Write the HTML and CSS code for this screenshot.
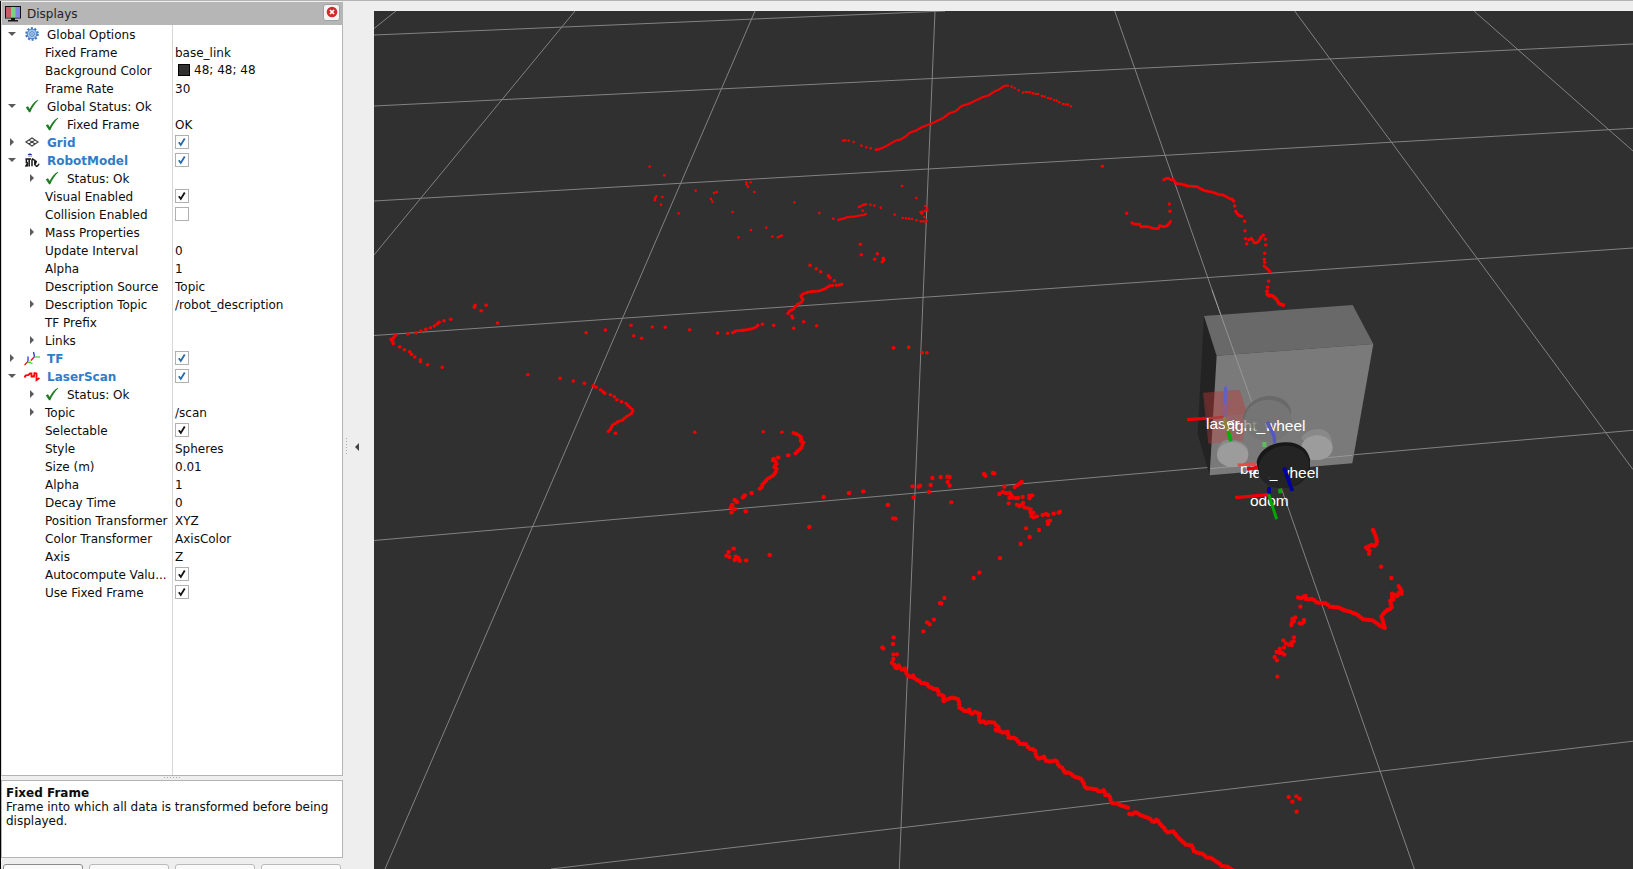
FILE: index.html
```html
<!DOCTYPE html>
<html lang="en">
<head>
<meta charset="utf-8">
<title>Displays</title>
<link rel="stylesheet" href="styles.css">
</head>
<body>
<svg class="defs" width="0" height="0">
  <symbol id="open" viewBox="0 0 8 8"><path d="M0 2h8L4 6z" fill="#5a5a5a"/></symbol>
  <symbol id="shut" viewBox="0 0 8 8"><path d="M2 0v8l4-4z" fill="#5a5a5a"/></symbol>
  <symbol id="ok" viewBox="0 0 14 14"><path d="M.8 8.2 3 7.2l1.700 2.700C6.500 6 9 2.800 12.800.7l.5.5C10 4.500 7.300 8.500 5.300 13.200H4z" fill="#1e7b22"/></symbol>
  <symbol id="gear" viewBox="0 0 14 14"><circle cx="7" cy="7" r="5.700" fill="none" stroke="#3f74ba" stroke-width="2.200" stroke-dasharray="2 1.581"/><circle cx="7" cy="7" r="4.800" fill="#a9c8ef" stroke="#4a7fc4" stroke-width="1"/><circle cx="7" cy="7" r="2.300" fill="#c8dcf5" stroke="#4a7fc4"/><circle cx="7" cy="7" r=".8" fill="#3f74ba"/></symbol>
  <symbol id="grid" viewBox="0 0 14 10"><path d="M.9 5 7 1 13.100 5 7 9zM3.900 3l6.200 4M10.100 3 3.900 7" fill="none" stroke="#3c3c3c" stroke-width="1.100"/></symbol>
  <symbol id="robot" viewBox="0 0 16 16"><path d="M3.500 1.500Q5.500-.2 8 1.500v1H3.500z" fill="#1c2f9a"/><path d="M4 3h4v1H4z" fill="#aaa"/><path d="M1 6.500h6M2 6v5M1 14.500l2-3v3M5 6.500v8M8 7v7M8 6l3 2v5M11 8l1.500 1L11 13M12 13c.5 2 2 1.500 3.500-1.500" stroke="#161616" stroke-width="1.600" fill="none"/></symbol>
  <symbol id="tf" viewBox="0 0 16 14"><path d="M4 10 .5 13.500M10.500 5 7 9" stroke="#e81010" stroke-width="1.200" fill="none"/><path d="M4 10V5M10.500 5 9.500.5" stroke="#1a1aff" stroke-width="1.200"/><path d="M4 10.500 8.500 12M10.500 5.500H16" stroke="#00d800" stroke-width="1.200"/><path d="m7 9-2.500 1.500" stroke="#e8d820" stroke-width="1.200"/></symbol>
  <symbol id="laser" viewBox="0 0 16 10"><path d="M.5 6 1.500 4 4.500 3.500 6 2 7.500 2 7.500 5 10 5 10.500 1.500 12.500 2 12.500 8.500 15.500 6.500" fill="none" stroke="#f00" stroke-width="1.800"/></symbol>
  <symbol id="check" viewBox="0 0 14 14"><path d="m3.300 7.300 2.300 3.200L10.200 3" fill="none" stroke="currentColor" stroke-width="2.100"/></symbol>
</svg>
<main class="app">
  <section class="dock">
    <header class="title">
      <svg class="monitor" viewBox="0 0 16 16"><rect x=".5" y=".5" width="15" height="11.500" fill="#aaa" stroke="#111"/><path d="M1 1h5v10.500H1z" fill="#c65c63"/><path d="M6 1h4.500v10.500H6z" fill="#7ad07c"/><path d="M10.500 1H15v10.500h-4.500z" fill="#8383e6"/><path d="M6 12h4v2h3v1.500H3V14h3z" fill="#151515"/></svg>
      <span>Displays</span>
      <button class="close" aria-label="Close"><svg viewBox="0 0 12 12"><circle cx="6" cy="6" r="5.300" fill="#d12a2a"/><path d="m4 4 4 4M8 4 4 8" stroke="#fff" stroke-width="1.700"/></svg></button>
    </header>
    <div class="tree">
      <div class="row"><div class="name"><svg class="arr"><use href="#open"/></svg><svg class="ico"><use href="#gear"/></svg><b class="t">Global Options</b></div><div class="val"></div></div>
      <div class="row"><div class="name prop">Fixed Frame</div><div class="val">base_link</div></div>
      <div class="row"><div class="name prop">Background Color</div><div class="val color"><i class="swatch"></i>48; 48; 48</div></div>
      <div class="row"><div class="name prop">Frame Rate</div><div class="val">30</div></div>
      <div class="row"><div class="name"><svg class="arr"><use href="#open"/></svg><svg class="ico"><use href="#ok"/></svg><b class="t">Global Status: Ok</b></div><div class="val"></div></div>
      <div class="row"><div class="name sub"><svg class="arr"></svg><svg class="ico"><use href="#ok"/></svg><b class="t">Fixed Frame</b></div><div class="val">OK</div></div>
      <div class="row"><div class="name"><svg class="arr"><use href="#shut"/></svg><svg class="ico"><use href="#grid"/></svg><b class="t display">Grid</b></div><div class="val"><svg class="box blue"><use href="#check"/></svg></div></div>
      <div class="row"><div class="name"><svg class="arr"><use href="#open"/></svg><svg class="ico wide"><use href="#robot"/></svg><b class="t display">RobotModel</b></div><div class="val"><svg class="box blue"><use href="#check"/></svg></div></div>
      <div class="row"><div class="name sub"><svg class="arr"><use href="#shut"/></svg><svg class="ico"><use href="#ok"/></svg><b class="t">Status: Ok</b></div><div class="val"></div></div>
      <div class="row"><div class="name prop">Visual Enabled</div><div class="val"><svg class="box"><use href="#check"/></svg></div></div>
      <div class="row"><div class="name prop">Collision Enabled</div><div class="val"><svg class="box"></svg></div></div>
      <div class="row"><div class="name branch"><svg class="arr"><use href="#shut"/></svg>Mass Properties</div><div class="val"></div></div>
      <div class="row"><div class="name prop">Update Interval</div><div class="val">0</div></div>
      <div class="row"><div class="name prop">Alpha</div><div class="val">1</div></div>
      <div class="row"><div class="name prop">Description Source</div><div class="val">Topic</div></div>
      <div class="row"><div class="name branch"><svg class="arr"><use href="#shut"/></svg>Description Topic</div><div class="val">/robot_description</div></div>
      <div class="row"><div class="name prop">TF Prefix</div><div class="val"></div></div>
      <div class="row"><div class="name branch"><svg class="arr"><use href="#shut"/></svg>Links</div><div class="val"></div></div>
      <div class="row"><div class="name"><svg class="arr"><use href="#shut"/></svg><svg class="ico wide"><use href="#tf"/></svg><b class="t display">TF</b></div><div class="val"><svg class="box blue"><use href="#check"/></svg></div></div>
      <div class="row"><div class="name"><svg class="arr"><use href="#open"/></svg><svg class="ico wide"><use href="#laser"/></svg><b class="t display">LaserScan</b></div><div class="val"><svg class="box blue"><use href="#check"/></svg></div></div>
      <div class="row"><div class="name sub"><svg class="arr"><use href="#shut"/></svg><svg class="ico"><use href="#ok"/></svg><b class="t">Status: Ok</b></div><div class="val"></div></div>
      <div class="row"><div class="name branch"><svg class="arr"><use href="#shut"/></svg>Topic</div><div class="val">/scan</div></div>
      <div class="row"><div class="name prop">Selectable</div><div class="val"><svg class="box"><use href="#check"/></svg></div></div>
      <div class="row"><div class="name prop">Style</div><div class="val">Spheres</div></div>
      <div class="row"><div class="name prop">Size (m)</div><div class="val">0.01</div></div>
      <div class="row"><div class="name prop">Alpha</div><div class="val">1</div></div>
      <div class="row"><div class="name prop">Decay Time</div><div class="val">0</div></div>
      <div class="row"><div class="name prop">Position Transformer</div><div class="val">XYZ</div></div>
      <div class="row"><div class="name prop">Color Transformer</div><div class="val">AxisColor</div></div>
      <div class="row"><div class="name prop">Axis</div><div class="val">Z</div></div>
      <div class="row"><div class="name prop">Autocompute Valu...</div><div class="val"><svg class="box"><use href="#check"/></svg></div></div>
      <div class="row"><div class="name prop">Use Fixed Frame</div><div class="val"><svg class="box"><use href="#check"/></svg></div></div>
      <div class="row rest"><div class="name"></div><div class="val"></div></div>
    </div>
    <div class="split"><i></i></div>
    <div class="help"><strong>Fixed Frame</strong><p>Frame into which all data is transformed before being displayed.</p></div>
    <div class="buttons"><i class="first"></i><i></i><i></i><i></i></div>
  </section>
  <div class="handle"><i class="grip"></i><svg width="8" height="8" viewBox="0 0 8 8"><path d="M6 0v8L2 4z" fill="#444"/></svg></div>
  <svg class="view" viewBox="374 11 1259 858">
    <defs>
      <marker id="d3" class="mk" markerUnits="userSpaceOnUse" markerWidth="16" markerHeight="16" refX="8" refY="8"><circle cx="8" cy="8" r="3.900"/></marker>
      <marker id="d4" class="mk" markerUnits="userSpaceOnUse" markerWidth="16" markerHeight="16" refX="8" refY="8"><circle cx="8" cy="8" r="5.200"/></marker>
      <marker id="d5" class="mk" markerUnits="userSpaceOnUse" markerWidth="16" markerHeight="16" refX="8" refY="8"><circle cx="8" cy="8" r="6.500"/></marker>
      <clipPath id="near"><path d="M255 515h41v60h-41zM326 563h27v20h-27zM380 515h110v60H380z"/></clipPath>
    </defs>
    <g class="lines">
      <path d="M374 28.500 396 11M374 255 575 11M385 869 755 11M899.300 869 935 11M1114.700 11 1215.600 300 1414.300 869M1294.700 11 1633 469.600M1474 11 1633 151"/>
      <path d="M374 35 945 11M374 106 1633 44M374 201 1633 128.300M374 335.500 1633 248M374 540.500 1160 471.700 1633 430.300M551 869 1250 786.700 1633 741.200"/>
    </g>
    <!-- far wall and furniture -->
    <g transform="translate(630 70) scale(.33333)">
      <polyline class="run s" points="740,239 752,236 768,229 784,219 798,212 812,208 826,200 840,188 858,182 876,171 902,162 920,153 940,144 956,131 980,122 994,108 1018,101 1056,82 1076,76 1092,65 1108,58 1122,48 1132,47"/>
      <polyline class="p3" points="640,212 646,211 656,212 671,216 694,227 709,232 722,235 738,239 1133,47 1145,50 1154,54 1166,61 1179,68 1187,66 1193,66 1200,67 1209,70 1217,72 1224,72 1236,78 1244,80 1254,84 1262,86 1272,90 1280,92 1288,97 1299,102 1307,103 1314,104 1323,109"/>
      <polyline class="p3" points="59,290 103,316 197,362 252,369 260,366 243,387 247,395 349,337 350,343 362,337 354,350 373,366 79,379 75,385 75,391 97,381 93,404 146,430 308,426 325,502 363,480 409,473 427,500 444,502 450,499 455,497 493,397 568,429 816,348 859,384 886,408 891,415 892,422 885,423 877,425 872,427 876,431 883,441 890,452 887,455 880,454 872,454 859,451 846,447 837,446 828,445 818,444 794,434 752,413 733,407 721,404 708,403 702,404 697,406 692,409 687,411 698,422 707,432 610,446"/>
      <polyline class="run s" points="626,449 640,446 654,441 672,440 688,437 704,434"/>
      <polyline class="p4" points="691,523 694,554 742,551 734,568 760,565 761,570 757,575 540,586 559,596 572,605 595,617 600,623 613,632 619,646 628,645 635,643 485,738 488,744 521,755 491,775 560,767 431,766 397,763 3,766 11,797 35,805 67,771 106,772 179,779 263,789 293,790 340,781 790,833 836,832"/>
      <polyline class="run" points="608,646 596,648 586,656 576,660 562,664 544,664 528,668 514,674 512,682 520,686 514,698 500,704 492,716 480,722 472,733"/>
      <polyline class="run" points="308,788 320,782 340,781 356,778 370,775 380,770 386,764"/>
    </g>
    <!-- left side -->
    <g transform="translate(374 280) scale(.35714 .33333)">
      <polyline class="p4" points="283,76 281,82 300,92 314,76 346,129 215,118 196,122 182,127 177,132 169,138 158,143 145,148 131,153 118,158 95,162 60,166 55,173 48,178 52,184 54,191 72,200 85,209 100,215 105,223 114,231 130,239 130,245 150,254 191,262 594,158 648,150 431,284 521,295 558,303 589,310 614,317 622,322 634,329 641,335 646,340 662,344 673,350 680,359 693,365 676,460 898,457 1090,455 1142,457 1455,204 1497,202 1535,218 1548,218"/>
      <polyline class="run" points="706,370 714,380 726,390 720,402 706,410 696,420 684,424 674,432 666,436 664,446 652,458"/>
      <polyline class="run m" points="1175,459 1188,464 1198,474 1193,482 1202,487 1198,501 1190,510 1180,520"/>
      <polyline class="run m" points="1117,541 1124,544 1128,554 1119,560 1128,568 1123,580 1114,590 1104,594 1096,604 1088,612 1086,622 1076,630"/>
      <polyline class="p5" points="1160,526 1132,533 1119,537 1057,639 1038,646 1033,652 1010,660 1016,666 1003,675 999,683 1010,687 1001,697 1041,694 1259,651 1330,639 1370,634 1439,675 1454,715 1460,716 1219,741 1007,806 993,816 987,827 995,831 1013,830 1020,834 1010,840 1024,842 1042,841 1108,825"/>
    </g>
    <!-- near wall -->
    <g transform="translate(850 450) scale(.33333)">
      <polyline class="p5" points="187,109 206,110 210,107 247,84 272,81 292,80 299,81 293,96 299,107 242,105 237,126 191,142 304,157 402,72 406,77 429,69 433,70 463,110 494,111 502,106 509,101 515,96 448,132 458,126 468,129 479,129 484,136 478,144 487,143 497,144 504,144 518,141 476,160 538,137 547,136 539,145 519,159 501,164 508,168 516,164 523,172 533,175 542,178 541,186 550,188 544,198 551,202 560,199 578,195 588,192 594,195 611,191 626,188 630,185 593,214 600,212 594,222 528,235 567,240 539,261 512,282 450,324 388,368 371,384 283,444 270,459 274,461 252,509 231,517 239,523 220,544 131,562 129,582 97,592 100,595 130,613 141,613 130,627"/>
      <polyline class="run l" points="126,638 134,646 138,657 146,646 153,659 166,655 168,668 178,682 190,676 194,686 206,692 214,699 230,700 236,710 252,717 264,718 266,733 281,736 279,754 293,747 308,743 326,748 328,773 338,778 346,785 358,779 363,793 374,786 390,791 386,804 390,816 402,814 408,820 418,815 434,819 440,828 449,833 435,841 452,843 460,849 473,844 476,865 492,863 502,870 508,881 528,883 538,896 554,899 558,918 568,927 584,919 586,932 602,935 618,930 626,948 640,956 643,968 658,967 672,980 692,985 700,997 706,1014 724,1016 738,1018 748,1026 763,1020 766,1036 778,1035 784,1059 800,1060 816,1068 834,1073"/>
      <polyline class="run l" points="838,1092 848,1093 856,1085 872,1096 888,1101 902,1107 910,1118 921,1108 932,1124 942,1134 950,1147 970,1144 980,1158 994,1172 1008,1184 1026,1187 1032,1204 1046,1209 1060,1212 1068,1222 1084,1224 1096,1233 1108,1240 1116,1249 1132,1250 1150,1262"/>
    </g>
    <!-- right side -->
    <g transform="translate(1080 150) scale(.33333)">
      <polyline class="p4" points="67,49 140,190 268,162 270,184 461,153 464,168 494,214 495,242 497,266 500,281 543,262 550,256 556,268 557,285 554,310 553,328 554,337 566,393 563,412"/>
      <polyline class="run" points="252,89 262,83 272,89 279,87 287,100 308,103 322,108 352,110 370,121 400,127 414,133 430,135 446,144 459,149"/>
      <polyline class="run" points="467,184 474,194 480,198 492,199"/>
      <polyline class="run" points="507,269 515,265 524,280 534,276 543,264"/>
      <polyline class="run" points="156,219 166,223 178,222 184,231 202,229 218,235 235,236 240,226 250,231 264,226 272,213"/>
      <polyline class="run" points="553,348 562,357 568,362 572,371"/>
      <polyline class="run m" points="561,424 562,436 576,437 588,446 598,462 616,467"/>
    </g>
    <g transform="translate(1240 510) scale(.33333)">
      <polyline class="run l" points="399,60 406,76 411,92 407,108 395,105 377,113 389,120 387,132"/>
      <polyline class="run l" points="476,229 484,240 486,252 474,248 474,260 456,250 456,260 462,270 450,270 453,284 456,294 442,300 432,308 424,320 428,330 431,342 434,354 418,346 408,338 394,330 372,329 362,322 350,313 330,305 314,301 298,293 270,290 258,280 230,277 218,267 198,268 196,256 184,265 172,262"/>
      <polyline class="p5" points="423,170 454,204 181,290 166,322 157,327 162,333 156,338 154,345 192,330 191,336 185,341 179,340 162,382 161,394 155,397 155,405 146,404 138,401 130,391 132,413 119,417 110,426 119,429 126,428 133,434 104,441 111,451 112,500 146,861 169,859 179,866 157,875 170,905"/>
    </g>
    <!-- robot model with its frame axes -->
    <g class="robot" transform="translate(1160 290) scale(.33333)">
      <path d="M132 78 170 197 149 556 113 432z" fill="#232323"/>
      <path d="M132 78 578 45 640 162 170 197z" fill="#696969"/>
      <path d="M170 197 640 162 577 520 149 556z" fill="#7a7a7a"/>
      <path d="M156 0 275 335M150 536 577 496" stroke="#a0a0a0" stroke-width="3" opacity=".8"/>
      <path d="m129 308 110-9 23 72-14 82-103 8z" fill="#c44040" opacity=".36"/><path d="m129 308 110-9 23 72-114 10z" fill="#b82020" opacity=".1"/>
      <path d="M248 386C256 344 290 318 328 318c32 0 54 12 65 42v28z" fill="#696969"/>
      <ellipse cx="325" cy="392" rx="71" ry="63" fill="#757575"/>
      <path d="m170 478 18-25c20-8 60-5 76 23v20z" fill="#898989"/><ellipse cx="218" cy="494" rx="47" ry="38" fill="#9c9c9c"/>
      <path d="m423 446c10-20 32-29 55-29 25 3 36 17 39 45l-20 28z" fill="#898989"/><ellipse cx="471" cy="473" rx="47" ry="37" fill="#9c9c9c"/>
      <path d="m197 290-3 90" stroke="#6161c4" stroke-width="9"/><path d="m194 342-2 38" stroke="#8e5a87" stroke-width="9"/>
      <path d="m81 389 57-4" stroke="#ed0000" stroke-width="10"/><path d="m138 385 54-4" stroke="#b63535" stroke-width="7"/>
      <path d="m192 381 13 43" stroke="#8d8137" stroke-width="9"/>
      <path d="m313 456 0 15" stroke="#5abf5a" stroke-width="12"/>
      <path d="m322 396 20 42 2 22" stroke="#5757c0" stroke-width="10" fill="none"/>
      <g class="tag"><text x="138" y="416">laser</text><text x="199" y="423">right_wheel</text><text x="240" y="551">base_link</text><text x="270" y="647">odom</text></g>
      <path d="m233 525 55-4" stroke="#e84848" stroke-width="9"/>
      <path d="m252 388h82l-4 26h-78z" fill="#747474" opacity=".6"/>
      <path d="m272 423v-35h50v35z" fill="#747474" opacity=".5"/>
      <path d="m192 385 10 34" stroke="#8d8137" stroke-width="9"/><path d="m204 422 9 32" stroke="#05ae05" stroke-width="11"/>
      <path d="m322 396 20 42" stroke="#5757c0" stroke-width="10"/>
      <path d="m290 515c8-35 46-59 87-58 40-1 66 20 73 50v35c-13 33-47 54-89 52-41 0-68-28-71-79z" fill="#181818"/>
      <ellipse cx="372" cy="531" rx="77" ry="63" fill="#242424" transform="rotate(-14 372 531)"/>
      <g class="tag" clip-path="url(#near)"><text x="267" y="563">left_wheel</text></g>
      <path d="m260 537 33-4" stroke="#e80000" stroke-width="11"/>
      <path d="m372 533 25 70" stroke="#0000a2" stroke-width="11"/>
      <path d="m360 596 1 14" stroke="#00a900" stroke-width="11"/>
      <path d="m328 591-2 21" stroke="#0000a6" stroke-width="11"/>
      <path d="m225 623 100-9" stroke="#ed0000" stroke-width="10"/>
      <path d="m326 613 24 75" stroke="#00a500" stroke-width="9"/>
    </g>
  </svg>
</main>
</body>
</html>
```
FILE: styles.css
```css
* { box-sizing: border-box; }
body { margin: 0; background: #eee; font: 12px/18px "DejaVu Sans", sans-serif; color: #0c0c0c; overflow: hidden; }
.defs { display: block; height: 0; }
.app { display: flex; width: 1633px; height: 869px; border-top: 1px solid #b4b4b4; overflow: hidden; }
.dock { width: 343px; flex: none; border-left: 1px solid #000; display: flex; flex-direction: column; }
.title { height: 24px; flex: none; border-top: 1px solid #eee; border-left: 1px solid #d8d8d8; background: #b6b6b6; display: flex; align-items: center; padding: 0 3px 0 3px; gap: 6px; color: #222; }
.title span { flex: 1; }
.monitor { width: 16px; height: 16px; }
.close { width: 17px; height: 17px; margin-bottom: 3px; padding: 0; border: 1px solid #a0a0a0; border-radius: 3px; background: #f4f4f4; display: grid; place-items: center; }
.close svg { width: 12px; height: 12px; }
.tree { height: 751px; flex: none; background: #fff; border: 1px solid #b4b4b4; border-top: 0; border-left-color: #d8d8d8; display: flex; flex-direction: column; }
.row { height: 18px; flex: none; display: flex; white-space: nowrap; }
.rest { flex: 1; }
.name { width: 171px; border-right: 1px solid #d6d6d6; display: flex; align-items: center; padding: 1px 0 0 6px; }
.val { flex: 1; padding: 1px 0 0 2px; display: flex; align-items: center; }
.sub { padding-left: 26px; }
.prop { padding-left: 43px; }
.branch { padding-left: 26px; gap: 9px; }
.arr { width: 8px; height: 8px; flex: none; margin-bottom: 2px; }
.ico { width: 14px; height: 14px; margin: 0 8px 2px 9px; flex: none; }
.ico.wide { width: 16px; height: 15px; margin: 0 7px 1px 8px; }
.t { font-weight: normal; }
.display { font-weight: bold; color: #2f7dca; }
.box { width: 14px; height: 14px; border: 1px solid #b0b0b0; background: #fff; color: #111; margin-bottom: 1px; }
.blue { color: #2468ae; }
.color { padding: 0 0 1px 5px; gap: 4px; }
.swatch { width: 12px; height: 12px; background: #303030; border: 1px solid #000; margin-top: 1px; }
.split { height: 4px; flex: none; display: flex; justify-content: center; align-items: flex-start; }
.split i { width: 17px; height: 1px; margin-top: 1px; background: repeating-linear-gradient(90deg, #aaa 0 1px, transparent 1px 3px); }
.help { height: 78px; flex: none; border: 1px solid #b4b4b4; background: #fff; padding: 5px 4px; line-height: 14px; }
.help p { margin: 0; }
.buttons { flex: 1; display: flex; gap: 6px; padding: 6px 2px 0; }
.buttons i { flex: 1; height: 24px; border: 1px solid #bababa; border-radius: 3px; background: #fafafa; }
.buttons .first { border-color: #8c8c8c; }
.handle { width: 31px; flex: none; display: flex; align-items: center; padding: 23px 0 0 3px; gap: 6px; }
.grip { width: 1px; height: 17px; background: repeating-linear-gradient(180deg, #aaa 0 1px, transparent 1px 3px); }
.view { width: 1259px; height: 858px; margin-top: 10px; flex: none; background: #303030; }
.lines path { fill: none; stroke: #828282; stroke-width: 1; }
.mk { overflow: visible; }
.mk circle { fill: #f40000; }
.p3, .p4, .p5 { fill: none; stroke: none; }
.p3 { marker: url(#d3); }
.p4 { marker: url(#d4); }
.p5 { marker: url(#d5); }
.run { fill: none; stroke: #f40000; stroke-width: 10; stroke-linecap: round; stroke-linejoin: round; stroke-dasharray: 0 8; }
.run.s { stroke-width: 7.500; stroke-dasharray: 0 6.500; }
.run.m { stroke-width: 12; }
.run.l { stroke-width: 13.500; stroke-dasharray: 0 9; }
.tag text { font: 46.500px "Liberation Sans", sans-serif; fill: #fff; }
```
